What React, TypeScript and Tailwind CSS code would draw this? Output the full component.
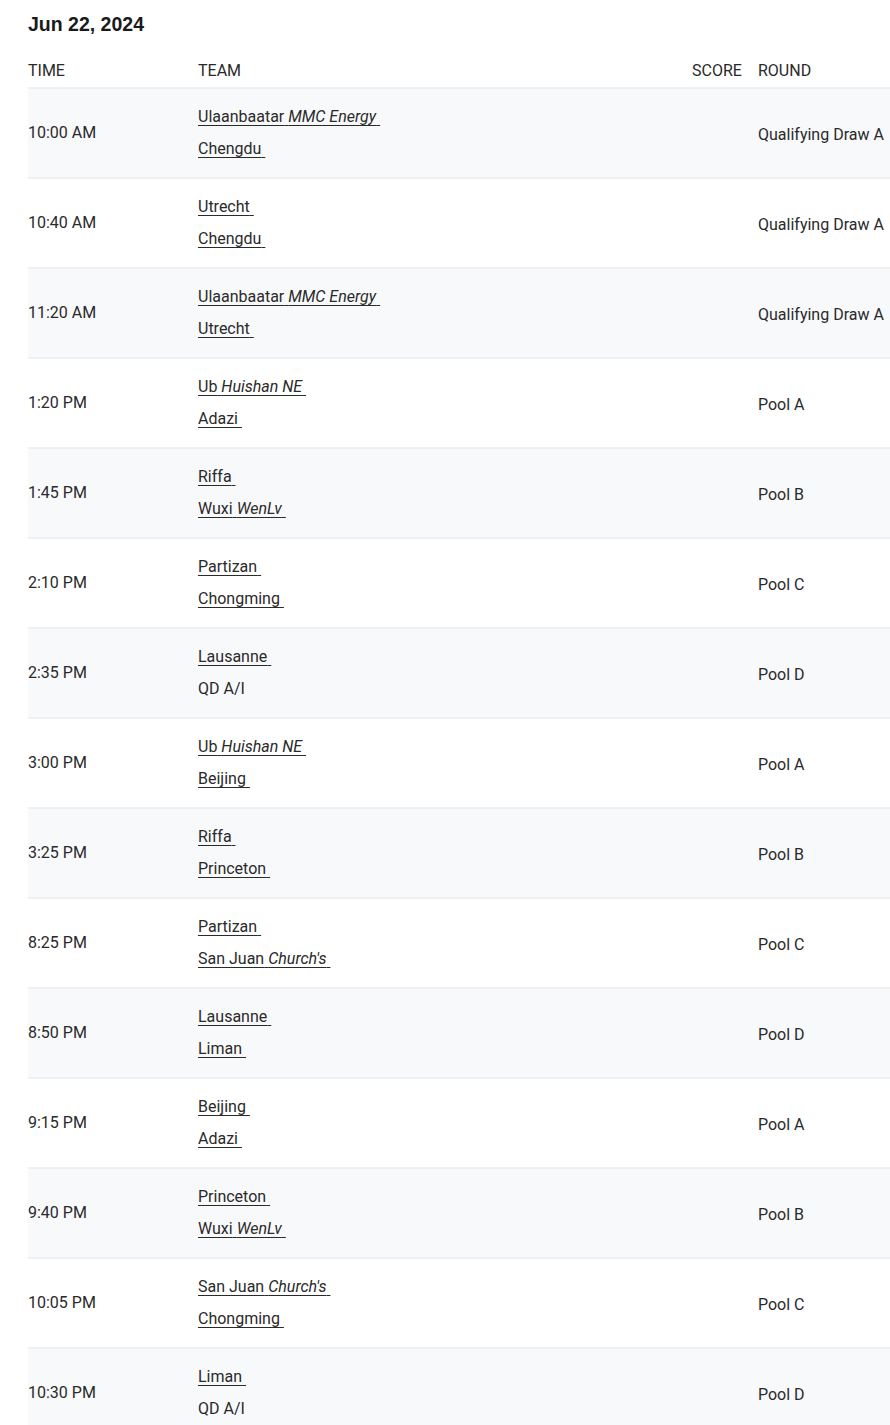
type Team = { name: string; sub?: string; link?: boolean };

interface Game {
  time: string;
  home: Team;
  away: Team;
  round: string;
}

const T = (name: string, sub?: string, link = true): Team => ({ name, sub, link });

const GAMES: Game[] = [
  { time: '10:00 AM', home: T('Ulaanbaatar', 'MMC Energy'), away: T('Chengdu'), round: 'Qualifying Draw A' },
  { time: '10:40 AM', home: T('Utrecht'), away: T('Chengdu'), round: 'Qualifying Draw A' },
  { time: '11:20 AM', home: T('Ulaanbaatar', 'MMC Energy'), away: T('Utrecht'), round: 'Qualifying Draw A' },
  { time: '1:20 PM', home: T('Ub', 'Huishan NE'), away: T('Adazi'), round: 'Pool A' },
  { time: '1:45 PM', home: T('Riffa'), away: T('Wuxi', 'WenLv'), round: 'Pool B' },
  { time: '2:10 PM', home: T('Partizan'), away: T('Chongming'), round: 'Pool C' },
  { time: '2:35 PM', home: T('Lausanne'), away: T('QD A/I', undefined, false), round: 'Pool D' },
  { time: '3:00 PM', home: T('Ub', 'Huishan NE'), away: T('Beijing'), round: 'Pool A' },
  { time: '3:25 PM', home: T('Riffa'), away: T('Princeton'), round: 'Pool B' },
  { time: '8:25 PM', home: T('Partizan'), away: T('San Juan', "Church's"), round: 'Pool C' },
  { time: '8:50 PM', home: T('Lausanne'), away: T('Liman'), round: 'Pool D' },
  { time: '9:15 PM', home: T('Beijing'), away: T('Adazi'), round: 'Pool A' },
  { time: '9:40 PM', home: T('Princeton'), away: T('Wuxi', 'WenLv'), round: 'Pool B' },
  { time: '10:05 PM', home: T('San Juan', "Church's"), away: T('Chongming'), round: 'Pool C' },
  { time: '10:30 PM', home: T('Liman'), away: T('QD A/I', undefined, false), round: 'Pool D' },
];

function TeamName({ team }: { team: Team }) {
  if (!team.link) return <div className="h-[32px] leading-[32px]">{team.name}</div>;
  return (
    <div className="h-[32px] leading-[32px]">
      <a href="#" className="underline underline-offset-[3px] decoration-[1px] whitespace-pre">
        {team.name}
        {team.sub ? ' ' : ''}
        {team.sub && <em className="italic">{team.sub}</em>}
        {' '}
      </a>
    </div>
  );
}

export default function App() {
  return (
    <div
      className="w-[890px] h-[1425px] overflow-hidden bg-white text-[#2a2a2a] pl-[28px]"
      style={{ fontFamily: 'Roboto, "Liberation Sans", sans-serif' }}
    >
      <h1
        className="text-[19.5px] font-bold text-[#1a1a1a] pt-[11px] leading-[26px]"
        style={{ fontFamily: '"Liberation Sans", Arial, sans-serif' }}
      >
        Jun 22, 2024
      </h1>

      <div className="w-[900px] mt-[20px]">
        <div className="flex h-[32px] items-center text-[16px] border-b-2 border-[#eef0f3] pb-[3px]">
          <div className="w-[170px]">TIME</div>
          <div className="w-[494px]">TEAM</div>
          <div className="w-[66px]">SCORE</div>
          <div className="flex-1">ROUND</div>
        </div>

        {GAMES.map((g, i) => (
          <div
            key={i}
            className={`flex h-[90px] items-center text-[16px] border-b-2 border-[#eef0f3] ${
              i % 2 === 0 ? 'bg-[#f8f9fb]' : 'bg-white'
            }`}
          >
            <div className="w-[170px]">{g.time}</div>
            <div className="w-[494px]">
              <TeamName team={g.home} />
              <TeamName team={g.away} />
            </div>
            <div className="w-[66px]"></div>
            <div className="flex-1 whitespace-nowrap pt-[3px]">{g.round}</div>
          </div>
        ))}
      </div>
    </div>
  );
}
